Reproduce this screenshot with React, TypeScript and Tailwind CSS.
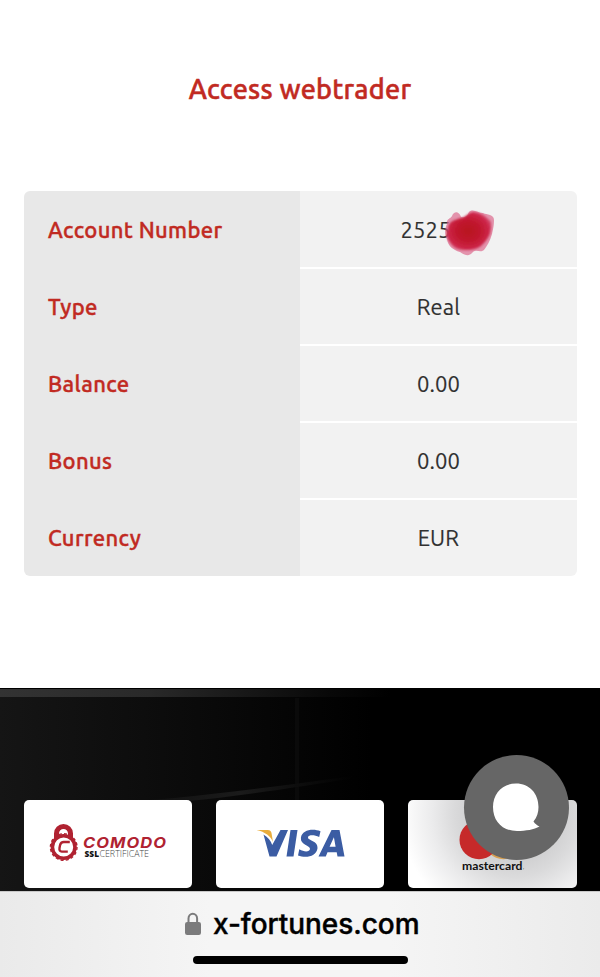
import React from "react";

const rows = [
  { label: "Account Number", value: "2525" },
  { label: "Type", value: "Real" },
  { label: "Balance", value: "0.00" },
  { label: "Bonus", value: "0.00" },
  { label: "Currency", value: "EUR" },
];

function Smudge() {
  return (
    <svg
      className="absolute left-[444px] top-[208px]"
      width="54"
      height="50"
      viewBox="444 208 54 50"
    >
      <defs>
        <radialGradient id="ink" cx="0.48" cy="0.5" r="0.55">
          <stop offset="0" stopColor="#b8121f" />
          <stop offset="0.5" stopColor="#c1182f" />
          <stop offset="0.85" stopColor="#cd2649" />
          <stop offset="1" stopColor="#d23a60" stopOpacity="0.8" />
        </radialGradient>
        <filter id="soft">
          <feGaussianBlur stdDeviation="0.8" />
        </filter>
      </defs>
      <path
        d="M447 224C446 219 450 219 452 216C454 211 459 211 461 217C464 218 467 217 469 212C473 208 478 213 483 213C487 215 494 214 494 220C494 226 493 229 492 234C490 241 487 246 484 250C480 253 477 249 473 252C468 258 463 254 460 252C453 250 448 246 447 239C444 234 445 228 447 224Z"
        fill="#da5f86"
        opacity="0.65"
      />
      <path
        d="M448 229C448 221 455 220 461 218C466 218 468 212 474 212C482 213 487 217 491 222C492 232 489 238 483 244C478 250 470 250 464 250C456 250 452 246 449 241C446 237 447 233 448 229Z"
        fill="url(#ink)"
        filter="url(#soft)"
      />
    </svg>
  );
}

function AccountTable() {
  return (
    <div className="mx-6 grid h-[385px] w-[553px] grid-rows-5 overflow-hidden rounded-[6px] bg-white">
      {rows.map((row, i) => (
        <div key={row.label} className="flex h-[77px]">
          <div className="flex w-[276px] items-center bg-[#e8e8e8] pl-6">
            <span className="text-[22px] leading-[30px] font-medium tracking-[0.36px] text-[#c12a22] [-webkit-text-stroke:0.4px_#c12a22]">
              {row.label}
            </span>
          </div>
          <div
            className={`flex flex-1 items-center bg-[#f2f2f2] ${
              i > 0 ? "border-t-1 border-white" : "pt-px"
            } ${i < 4 ? "border-b-1 border-white" : ""} ${
              i === 0 ? "pl-[100.500px]" : "justify-center"
            }`}
          >
            <span className="text-[22px] leading-[30px] tracking-[0.15px] text-[#303030] [-webkit-text-stroke:0.15px_#303030]">
              {row.value}
            </span>
          </div>
        </div>
      ))}
    </div>
  );
}

function ComodoLogo() {
  return (
    <svg width="168" height="88" viewBox="24 800 168 88">
      <path
        d="M56.500 838v-4.500a7 7 0 0 1 14 0v4.500"
        fill="none"
        stroke="#b02231"
        strokeWidth="5"
      />
      <circle cx="63.700" cy="847" r="11.300" fill="#fff" stroke="#b02231" strokeWidth="3.600" />
      <circle
        cx="63.700"
        cy="847"
        r="13.300"
        fill="none"
        stroke="#b02231"
        strokeWidth="1.400"
        strokeDasharray="3 2.220"
      />
      <path
        d="M69.800 842h-6q-3 0-3.700 3l-.6 3q-.5 3.600 2.300 3.600h6"
        fill="none"
        stroke="#b02231"
        strokeWidth="2.400"
      />
      <text
        x="83"
        y="848.200"
        textLength="84"
        lengthAdjust="spacingAndGlyphs"
        fontFamily="Inter"
        fontSize="14.500"
        fontWeight="700"
        fontStyle="italic"
        letterSpacing="0.900"
        fill="#b02231"
      >
        COMODO
      </text>
      <text
        x="84.500"
        y="857.300"
        textLength="14.500"
        lengthAdjust="spacingAndGlyphs"
        fontFamily="Open Sans"
        fontSize="8.800"
        fontWeight="800"
        fill="#111"
      >
        SSL
      </text>
      <text
        x="99.500"
        y="857.300"
        textLength="49.500"
        lengthAdjust="spacingAndGlyphs"
        fontFamily="Open Sans"
        fontSize="8.800"
        fontWeight="300"
        fill="#444"
      >
        CERTIFICATE
      </text>
    </svg>
  );
}

function VisaLogo() {
  return (
    <svg width="168" height="88" viewBox="216 800 168 88">
      <g fill="#3b5ca3">
        <path d="M263.500 834.500C268 837 271 841 272.200 845L280.500 830H288L276.500 856.500H269.500Z" />
        <path d="M290.500 830H297.500L293.500 856.500H286.500Z" />
        <path d="M320.500 831.200L319.200 837C314.500 834.800 308.500 834.600 308 837.300C307.600 840.700 318.300 840.700 317.500 848.300C316.500 856.800 305.500 858.500 298 855.400L299.300 849.300C304.500 852.300 309.500 852 310 849C310.400 845.700 300 845 300.900 837.800C302 829.300 313.500 828.200 320.500 831.200Z" />
        <path
          fillRule="evenodd"
          d="M331.500 830H339.500L344.500 856.500H337.500L336.700 852.300H327.500L325.800 856.500H318.500ZM329.600 846.800H335.600L333.900 837.200Z"
        />
      </g>
      <path
        d="M256.500 830H267.500C270.500 830 271.200 831.500 271.500 833L273 842C271 836.500 265 831.800 256.500 830Z"
        fill="#e9ad3d"
      />
    </svg>
  );
}

function MastercardLogo() {
  return (
    <svg width="169" height="88" viewBox="408.500 800 169 88">
      <circle cx="504" cy="839.700" r="19.500" fill="#d9a050" />
      <circle cx="479.500" cy="839.700" r="19.500" fill="#c62a2a" />
      <text
        x="462.500"
        y="869.500"
        textLength="60.500"
        lengthAdjust="spacingAndGlyphs"
        fontFamily="Lato"
        fontSize="10.500"
        fontWeight="700"
        fill="#111"
      >
        mastercard
      </text>
      <circle cx="524.200" cy="868.800" r=".5" fill="#777" />
    </svg>
  );
}

function ChatButton() {
  return (
    <button className="absolute left-[464px] top-[755px] size-[104.500px] rounded-full bg-[#666]">
      <svg width="104" height="104" viewBox="464 755 104 104">
        <path
          d="M516 783.500C502.500 783.500 493 793.500 493 807C493 821.500 502.500 831 517 831C526 831 534 829.500 539.500 826.500C537.500 825.500 535 824 533.500 821.500C537 817.500 538.500 812.500 538.500 807C538.500 793.500 529.500 783.500 516 783.500Z"
          fill="#fff"
        />
      </svg>
    </button>
  );
}

function Footer() {
  return (
    <div className="relative mt-[112px] h-[203px] overflow-hidden bg-[linear-gradient(90deg,#151515,#0b0b0b_30%,#000_62%)]">
      <div className="h-[9px] border-t border-black bg-[linear-gradient(90deg,#333,#292929_25%,#080808_55%,#000_65%)]" />
      <svg className="absolute left-0 top-0" width="600" height="203">
        <defs>
          <linearGradient id="streak">
            <stop offset="0" stopColor="#1d1d1d" stopOpacity="0" />
            <stop offset="0.55" stopColor="#1b1b1b" />
            <stop offset="1" stopColor="#111" stopOpacity="0" />
          </linearGradient>
        </defs>
        <path d="M100 115C180 112 260 100 355 88L355 90C260 105 190 116 100 119Z" fill="url(#streak)" />
        <path d="M297 10V112" stroke="#0e0e0e" strokeWidth="4" opacity="0.6" />
      </svg>
      <div className="relative mt-[103px] ml-6 flex gap-6">
        <div className="h-[88px] w-[168px] overflow-hidden rounded-[5px] bg-white">
          <ComodoLogo />
        </div>
        <div className="h-[88px] w-[168.400px] overflow-hidden rounded-[5px] bg-white">
          <VisaLogo />
        </div>
        <div className="h-[88px] w-[168.600px] overflow-hidden rounded-[5px] bg-[radial-gradient(circle_at_108px_14px,#cdcdce_40px,#dadadb_62px,#ebebec_84px,#fff_115px)]">
          <MastercardLogo />
        </div>
      </div>
    </div>
  );
}

function BrowserBar() {
  return (
    <div className="h-[86px] border-t border-[#c8c8c8] bg-[linear-gradient(90deg,#eaeaea,#f5f5f5_35%,#f5f5f5_65%,#ebebeb)]">
      <div className="flex h-[64px] items-center pl-[184px]">
        <svg width="18" height="24" viewBox="0 0 18 24" className="mt-[-1px]">
          <path d="M4.500 12V6.500a4.300 4.800 0 0 1 8.600 0V12" fill="none" stroke="#7b7b7c" strokeWidth="2" />
          <rect x="1" y="10" width="16" height="13" rx="2.200" fill="#7b7b7c" />
        </svg>
        <span className="ml-[11px] font-['Inter'] text-[28px] leading-8 font-medium tracking-[-0.05px] whitespace-nowrap text-black [-webkit-text-stroke:0.4px_#000]">
          x-fortunes.com
        </span>
      </div>
      <div className="ml-[193px] h-2 w-[215px] rounded-full bg-black" />
    </div>
  );
}

export default function App() {
  return (
    <div className="relative h-[977px] w-[600px] overflow-hidden bg-white font-['Ubuntu','Noto_Sans',sans-serif]">
      <h1 className="h-[191px] pt-[70px] text-center text-[27px] leading-[38px] font-medium tracking-[0.25px] text-[#c12a22] [-webkit-text-stroke:0.5px_#c12a22]">
        Access webtrader
      </h1>
      <AccountTable />
      <Smudge />
      <Footer />
      <BrowserBar />
      <ChatButton />
    </div>
  );
}
